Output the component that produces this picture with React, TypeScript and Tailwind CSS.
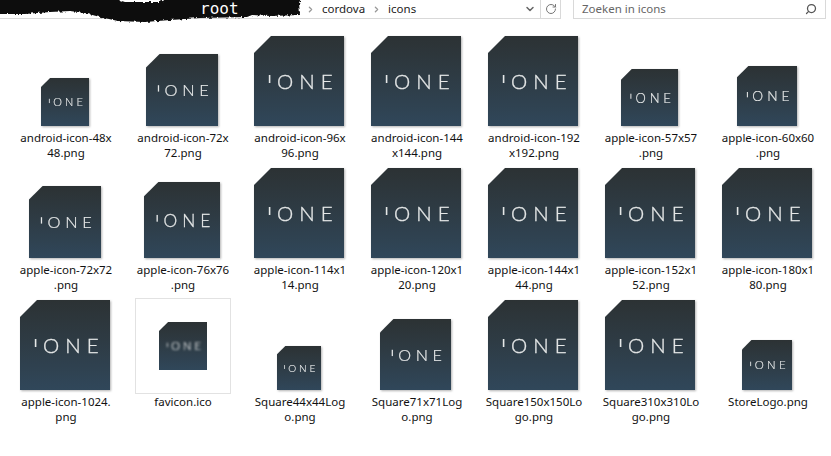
import { FC } from 'react';
import { ChevronRight, ChevronDown, RotateCw, Search } from 'lucide-react';

interface FileItem {
  size: number;
  name: string[];
  selected?: boolean;
}

const files: FileItem[] = [
  { size: 48, name: ['android-icon-48x', '48.png'] },
  { size: 72, name: ['android-icon-72x', '72.png'] },
  { size: 90, name: ['android-icon-96x', '96.png'] },
  { size: 90, name: ['android-icon-144', 'x144.png'] },
  { size: 90, name: ['android-icon-192', 'x192.png'] },
  { size: 57, name: ['apple-icon-57x57', '.png'] },
  { size: 60, name: ['apple-icon-60x60', '.png'] },
  { size: 72, name: ['apple-icon-72x72', '.png'] },
  { size: 76, name: ['apple-icon-76x76', '.png'] },
  { size: 90, name: ['apple-icon-114x1', '14.png'] },
  { size: 90, name: ['apple-icon-120x1', '20.png'] },
  { size: 90, name: ['apple-icon-144x1', '44.png'] },
  { size: 90, name: ['apple-icon-152x1', '52.png'] },
  { size: 90, name: ['apple-icon-180x1', '80.png'] },
  { size: 90, name: ['apple-icon-1024.', 'png'] },
  { size: 48, name: ['favicon.ico'], selected: true },
  { size: 44, name: ['Square44x44Log', 'o.png'] },
  { size: 71, name: ['Square71x71Log', 'o.png'] },
  { size: 90, name: ['Square150x150Lo', 'go.png'] },
  { size: 90, name: ['Square310x310Lo', 'go.png'] },
  { size: 50, name: ['StoreLogo.png'] },
];

const LogoIcon: FC<{ size: number; id: string; blurred?: boolean }> = ({ size, id, blurred }) => {
  return (
    <svg
      width={size}
      height={size}
      viewBox="0 0 90 90"
      className={blurred ? 'block' : 'block drop-shadow-[1px_1px_1px_rgba(0,0,0,0.3)]'}
    >
      <defs>
        <linearGradient id={id} x1="0" y1="0" x2="0" y2="1">
          <stop offset="0" stopColor="#2c3234" />
          <stop offset="0.45" stopColor="#2e3b44" />
          <stop offset="1" stopColor="#30475a" />
        </linearGradient>
        <filter id={id + 'b'}>
          <feGaussianBlur stdDeviation="2.4" />
        </filter>
      </defs>
      <polygon points="17,0 90,0 90,90 0,90 0,17" fill={`url(#${id})`} />
      <g
        fill="#e6e8e8"
        filter={blurred ? `url(#${id}b)` : undefined}
        fontFamily="Lato, sans-serif"
        fontWeight="300"
      >
        <rect x="14.8" y="39" width="1.6" height="8" />
        <text x="23" y="53" fontSize="20.5" letterSpacing="6" stroke="#e6e8e8" strokeWidth="0.3">
          ONE
        </text>
      </g>
    </svg>
  );
};

const FileCell: FC<{ file: FileItem; index: number }> = ({ file, index }) => {
  return (
    <div className="flex h-[132px] flex-col items-center">
      <div className="flex h-[96px] items-end justify-center">
        {file.selected ? (
          <div className="mb-[-4px] ml-[2px] flex h-[96px] w-[96px] items-center justify-center border border-[#e2e2e2]">
            <LogoIcon size={file.size} id={`logo${index}`} blurred />
          </div>
        ) : (
          <LogoIcon size={file.size} id={`logo${index}`} />
        )}
      </div>
      <p className="ml-[3px] mt-[4px] text-center text-[11.5px] leading-[15px] text-[#111]">
        {file.name[0]}
        {file.name[1] && <br />}
        {file.name[1]}
      </p>
    </div>
  );
};

const App: FC = () => {
  return (
    <div className="h-[456px] w-[831px] overflow-hidden bg-white font-['Noto_Sans',sans-serif]">
      <div className="flex h-[30px] items-start">
        <div className="flex h-[19px] w-[561px] items-center border-b border-r border-[#d9d9d9]">
          <div className="relative h-[19px] w-[304px] shrink-0">
            <svg width="304" height="26" className="absolute left-0 top-0">
              <defs>
                <filter id="scribble" x="-2%" y="-20%" width="104%" height="140%">
                  <feTurbulence type="fractalNoise" baseFrequency="0.35" numOctaves="2" seed="4" />
                  <feDisplacementMap in="SourceGraphic" scale="4" />
                </filter>
              </defs>
              <path
                d="M-4 -4 L105 -4 L125 2 L160 2 L175 -4 L302 -4 L299 3 L300 15 L270 16 L252 15 L247 17 L200 18 L170 20 L145 22 L118 21 L100 17 L85 13 L70 11 L50 12 L25 14 L-4 14 Z"
                fill="#0a0a0a"
                filter="url(#scribble)"
              />
            </svg>
            <span className="absolute left-[200px] top-0 font-['DejaVu_Sans_Mono',monospace] text-[16px] leading-[18px] text-white">
              root
            </span>
          </div>
          <ChevronRight className="ml-[2px] h-[9px] w-[9px] text-[#999]" strokeWidth={3.5} />
          <span className="ml-[7px] text-[11.5px] text-[#222]">cordova</span>
          <ChevronRight className="ml-[7px] h-[9px] w-[9px] text-[#999]" strokeWidth={3.5} />
          <span className="ml-[7px] text-[11.5px] text-[#222]">icons</span>
          <ChevronDown className="ml-auto mr-[4px] h-[12px] w-[12px] text-[#666]" strokeWidth={3} />
          <div className="flex h-[19px] w-[20px] items-center justify-center border-l border-[#d9d9d9]">
            <RotateCw className="h-[12px] w-[12px] text-[#777]" strokeWidth={2} />
          </div>
        </div>
        <div className="ml-[12px] flex h-[19px] w-[253px] items-center justify-between border-b border-l border-r border-[#d9d9d9] pl-[8px] pr-[8px]">
          <span className="text-[11.5px] text-[#666]">Zoeken in icons</span>
          <Search className="h-[12px] w-[12px] -scale-x-100 text-[#555]" strokeWidth={2.5} />
        </div>
      </div>
      <div className="grid grid-cols-[repeat(7,117px)] pl-[6px]">
        {files.map((file, i) => (
          <FileCell key={file.name[0]} file={file} index={i} />
        ))}
      </div>
    </div>
  );
};

export default App;
